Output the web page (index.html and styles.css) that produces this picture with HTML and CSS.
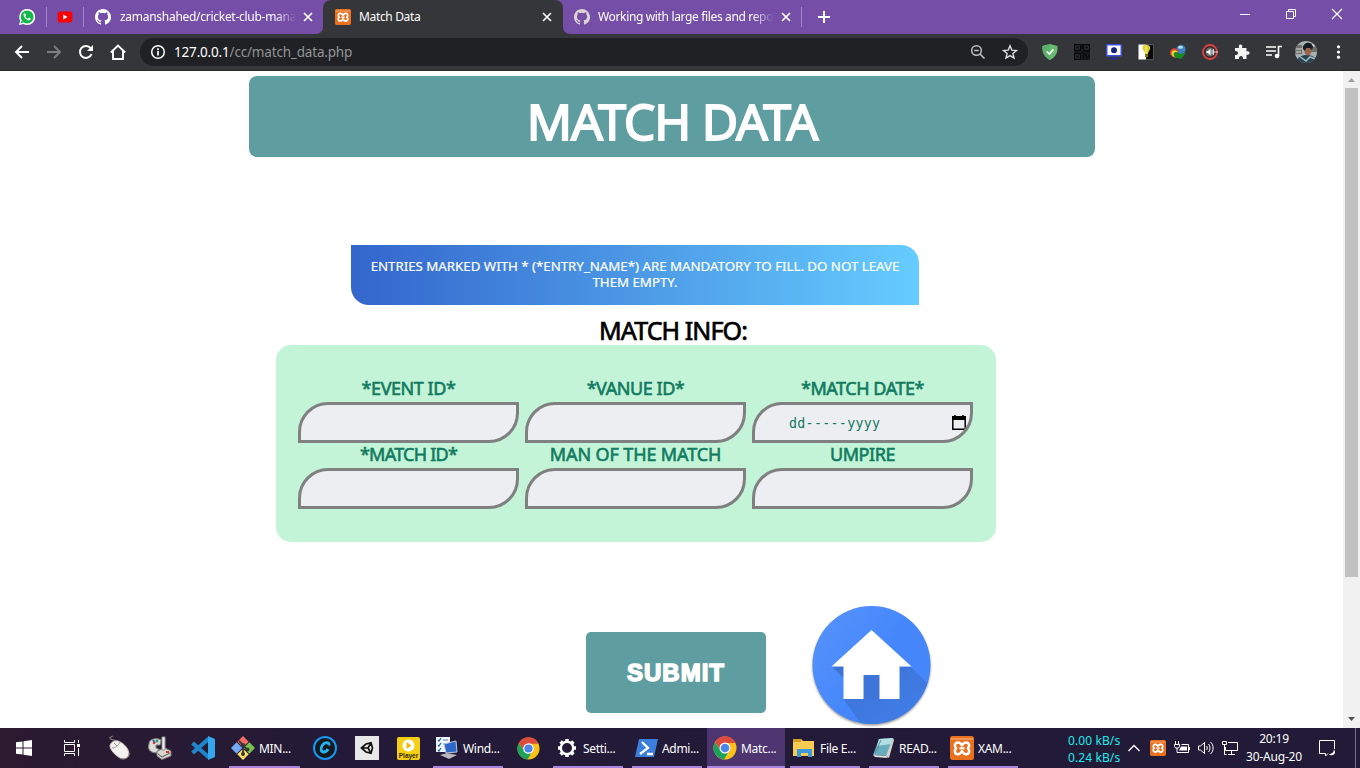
FILE: index.html
```html
<!DOCTYPE html>
<html lang="en">
<head>
<meta charset="utf-8">
<title>Match Data</title>
<link rel="stylesheet" href="styles.css">
</head>
<body>
<svg class="defs" aria-hidden="true">
  <symbol id="github" viewBox="0 0 16 16"><path fill="currentColor" d="M8 0C3.58 0 0 3.58 0 8c0 3.54 2.29 6.53 5.47 7.59.4.07.55-.17.55-.38v-1.49c-2.01.37-2.53-.49-2.69-.94-.09-.23-.48-.94-.82-1.13-.28-.15-.68-.52-.01-.53.63-.01 1.08.58 1.23.82.72 1.21 1.87.87 2.33.66.07-.52.28-.87.51-1.07-1.78-.2-3.64-.89-3.64-3.95 0-.87.31-1.59.82-2.15-.08-.2-.36-1.02.08-2.12 0 0 .67-.21 2.2.82a7.4 7.4 0 0 1 4 0c1.53-1.04 2.2-.82 2.2-.82.44 1.1.16 1.92.08 2.12.51.56.82 1.27.82 2.15 0 3.07-1.87 3.75-3.65 3.95.29.25.54.73.54 1.48v2.2c0 .21.15.46.55.38A8 8 0 0 0 8 0z"/></symbol>
  <symbol id="xampp" viewBox="0 0 24 24"><rect width="24" height="24" rx="2.5" fill="#e9701f"/><path d="M1 3h22" stroke="#f6b07c" stroke-width="1.200"/><path d="M12 9.500C10.500 6.500 9 6.300 7.500 6.500 4.500 7 4 10 6.200 12.300 4 14.500 4.500 18 7.500 18.200c1.500.1 3-.4 4.500-3.200 1.500 2.800 3 3.300 4.500 3.200 3-.2 3.500-3.700 1.300-5.900C20 10 19.500 7 16.500 6.500 15 6.300 13.500 6.500 12 9.500z" fill="none" stroke="#fff" stroke-width="2.500" stroke-linejoin="round"/><path d="M9.500 12.300h5" stroke="#fff" stroke-width="2.200"/></symbol>
  <symbol id="close" viewBox="0 0 10 10"><path d="M1 1l8 8M9 1L1 9" stroke="#fff" stroke-width="1.700"/></symbol>
  <symbol id="chrome" viewBox="0 0 24 24"><circle cx="12" cy="12" r="11.500" fill="#fbc116"/><path d="M2 6.300A11.500 11.500 0 0 1 22.500 7H12a5 5 0 0 0-4.600 7z" fill="#dd4b3e"/><path d="M2 6.300A11.500 11.500 0 0 0 11 23.500l5-8.600A5 5 0 0 1 7.500 14.500z" fill="#1da15d"/><circle cx="12" cy="12" r="5.500" fill="#fff"/><circle cx="12" cy="12" r="4.300" fill="#4a86e8"/></symbol>
</svg>
<div class="tabs">
  <div class="strip strip-left">
    <svg class="fav" viewBox="0 0 16 16"><path d="M0 16l1.200-4.200A8 8 0 1 1 4.400 15z" fill="#fff"/><circle cx="8.100" cy="7.900" r="6.500" fill="#12b84a"/><path d="M1.600 14.400l.8-3 2.200 2.200z" fill="#12b84a"/><path d="M5.600 4.200c-1.800.7-1 3.400.8 5.200s4.300 2.700 5.200.8c.3-.8-1.500-1.700-2-1.200l-.7.800C7.600 9.300 6.700 8.400 6.300 7.200l.6-.8c.3-.4-.6-2.300-1.300-2.200z" fill="#fff"/></svg>
    <i class="sep"></i>
    <svg class="fav yt" viewBox="0 0 16 16"><rect x=".7" y="2.500" width="14.600" height="11" rx="2" fill="#f00"/><path d="M6.300 5.500v5l4.300-2.500z" fill="#fff"/></svg>
    <i class="sep"></i>
    <svg class="fav pale"><use href="#github"/></svg>
    <span class="tab-title faded t-repo">zamanshahed/cricket-club-manag</span>
    <svg class="x"><use href="#close"/></svg>
  </div>
  <div class="active-wrap"><div class="active-tab">
    <svg class="fav"><use href="#xampp"/></svg><span class="tab-title t-active">Match Data</span><svg class="x"><use href="#close"/></svg>
  </div></div>
  <div class="strip strip-right">
    <svg class="fav dull"><use href="#github"/></svg>
    <span class="tab-title faded">Working with large files and repos</span>
    <svg class="x"><use href="#close"/></svg>
    <i class="sep last"></i>
    <svg class="plus" viewBox="0 0 12 12"><path d="M6 0v12M0 6h12" stroke="#fff" stroke-width="2"/></svg>
    <div class="win">
      <svg viewBox="0 0 12 12"><path d="M1 6.500h10" stroke="#fff"/></svg>
      <svg viewBox="0 0 12 12"><path d="M1.500 3.500h7v7h-7zM3.500 3.500v-2h7v7h-2" fill="none" stroke="#fff"/></svg>
      <svg viewBox="0 0 12 12"><path d="M1 1l10 10M11 1L1 11" stroke="#fff" stroke-width="1.200"/></svg>
    </div>
  </div>
</div>
<div class="toolbar">
  <svg viewBox="0 0 16 16"><path d="M15 8H2M8 2L2 8l6 6" fill="none" stroke="#fff" stroke-width="1.900"/></svg>
  <svg viewBox="0 0 16 16"><path d="M1 8h13M8 2l6 6-6 6" fill="none" stroke="#7c7d80" stroke-width="1.900"/></svg>
  <svg viewBox="0 0 16 16"><path d="M13.600 10A6 6 0 1 1 12.700 4.200" fill="none" stroke="#fff" stroke-width="2"/><path d="M15 1v6H9z" fill="#fff"/></svg>
  <svg viewBox="0 0 16 16"><path d="M.8 8.500L8 1.500l7.200 7M3 7v8h10V7" fill="none" stroke="#fff" stroke-width="1.900"/></svg>
  <div class="omnibox">
    <svg viewBox="0 0 16 16"><circle cx="8" cy="8" r="6.300" fill="none" stroke="#fff" stroke-width="1.500"/><path d="M8 7v4.500M8 4.300v1.600" stroke="#fff" stroke-width="1.700"/></svg>
    <span class="url"><b>127.0.0.1</b>/cc/match_data.php</span>
    <svg viewBox="0 0 16 16"><circle cx="6.500" cy="6.500" r="4.800" fill="none" stroke="#bfc0c2" stroke-width="1.500"/><path d="M4.200 6.500h4.600M10 10l4.500 4.500" stroke="#bfc0c2" stroke-width="1.500"/></svg>
    <svg viewBox="0 0 16 16"><path d="M8 1.800l1.800 4.300 4.700.4-3.600 3 1.100 4.600L8 11.600l-4 2.500 1.100-4.600-3.600-3 4.700-.4z" fill="none" stroke="#dedfe0" stroke-width="1.400"/></svg>
  </div>
  <svg viewBox="0 0 16 16"><path d="M8 0l7.500 2c.5 7-2 11-7.500 14C2.500 13 0 9 .5 2z" fill="#68bc71"/><path d="M8 0v16C2.500 13 0 9 .5 2z" fill="#5cae6b"/><path d="M4.800 7.500l2.500 2.500 4-4.500" fill="none" stroke="#fff" stroke-width="1.700"/></svg>
  <svg viewBox="0 0 16 16"><path d="M0 0h16v16H0z" fill="#1b1c1e"/><g fill="none" stroke="#08090a" stroke-width="1.200"><path d="M.6.600h5.800v5.800H.6zM9.600.600h5.800v5.800H9.600zM.6 9.600h5.800v5.800H.6zM2.500 3.500h2M11.500 3.500h2M2.500 12.500h2M8 0v5M7 8h9M8 10h4v2H9v3h3M15 10v3h-2v3"/></g><path d="M1.700 1.700h3.600v3.600H1.700zM10.700 1.700h3.600v3.600h-3.600zM1.700 10.700h3.600v3.600H1.700z" fill="none" stroke="#3a3b3f" stroke-width=".6"/></svg>
  <svg viewBox="0 0 16 16"><rect width="16" height="12.500" rx="1" fill="#3d4fd6"/><rect x="1.500" y="1.500" width="13" height="9.500" fill="#fff"/><circle cx="8" cy="6.300" r="3" fill="#16237d"/><path d="M3 13.500h10l-1.500 2h-7z" fill="#24309a"/></svg>
  <svg viewBox="0 0 16 16"><rect x=".5" y=".5" width="15" height="15" fill="#fff"/><path d="M8 .5h7.500v15H8z" fill="#090909"/><path d="M4.500 3C5 0 11 0 12 3c.7 3-1.700 4-2 7H7c0-3-3-4-2.500-7z" fill="#d9cf2d"/><path d="M8 2v7" stroke="#fff8a0"/><path d="M7 10h3v2.500L8.500 14 7 12.500z" fill="#786c20"/></svg>
  <svg viewBox="0 0 16 16"><circle cx="11" cy="5.500" r="4.700" fill="#3f7fbe"/><ellipse cx="10.500" cy="3.300" rx="2.500" ry="1.500" fill="#b9def0"/><path d="M0 8c1-4 5-5 8-2l-1 7c-4 1-7-1-7-5z" fill="#e3432b"/><path d="M1.500 9c0-3 4-4 6-1l-1 5.500c-3 0-5-2-5-4.500z" fill="#edd935"/><path d="M4 9c1-2 4-1 5 1l7-1-5 6-3-1c-3 0-5-2-4-5z" fill="#178a20"/></svg>
  <svg viewBox="0 0 16 16"><circle cx="8" cy="8" r="7" fill="#28292b" stroke="#e34242" stroke-width="1.800"/><circle cx="8" cy="8" r="4.500" fill="#66686a"/><path d="M4.500 7H6l2.500-2.500v7L6 9H4.500z" fill="#fff"/><path d="M10 6v4M11.500 5v6M12 8h4" stroke="#ddd"/></svg>
  <svg viewBox="0 0 16 16"><path d="M1 4h4C4.300 1.500 5.200.500 6.500.500S8.800 1.500 8 4h4.500v3.500c2-.7 3 .2 3 1.500s-1 2.200-3 1.500V15H9c.3-2-.7-3-2-3s-2.300 1-2 3H1v-4c2 .2 3-.6 3-2S3 6.800 1 7z" fill="#f3f3f3"/></svg>
  <svg viewBox="0 0 16 16"><path d="M0 3h10M0 7h10M0 11h6M12.500 12V2.500H16" fill="none" stroke="#fff" stroke-width="1.600"/><circle cx="11" cy="12" r="2.300" fill="#fff"/></svg>
  <svg class="avatar" viewBox="0 0 22 22"><clipPath id="av"><circle cx="11" cy="11" r="11"/></clipPath><g clip-path="url(#av)"><path d="M0 0h22v22H0z" fill="#a7b2b0"/><path d="M0 4h7v9H0zM16 6h6v5h-6z" fill="#716f6a"/><path d="M1 8h6M1 11h5M16 4h5" stroke="#d9e1df"/><path d="M2 22c0-6 4-8 10-8 5 0 9 2 9 8z" fill="#294451"/><path d="M4 15l7 5 4-4 5 2" stroke="#9dbbc8" fill="none" stroke-width="1.500"/><ellipse cx="13" cy="9.500" rx="3.500" ry="5" fill="#9b6349"/><path d="M8 8C7 1 17-1 18 6l-1 3-2-2h-4l-1 3z" fill="#171b22"/></g></svg>
  <svg viewBox="0 0 16 16"><g fill="#fff"><circle cx="8.500" cy="2.800" r="1.600"/><circle cx="8.500" cy="8" r="1.600"/><circle cx="8.500" cy="13.200" r="1.600"/></g></svg>
</div>
<div class="viewport">
  <main>
    <h1>MATCH DATA</h1>
    <p class="notice">ENTRIES MARKED WITH * (*ENTRY_NAME*) ARE MANDATORY TO FILL. DO NOT LEAVE<br>THEM EMPTY.</p>
    <h2>MATCH INFO:</h2>
    <form>
      <label><span class="name">*EVENT ID*</span><span class="field"></span></label>
      <label><span class="name">*VANUE ID*</span><span class="field"></span></label>
      <label><span class="name">*MATCH DATE*</span><span class="field date"><span>dd-----yyyy</span><svg viewBox="0 0 14 16"><path d="M3 0v3M11 0v3" stroke="#000" stroke-width="1.600"/><path d="M0 1h14v4H0z"/><path d="M.8 4v10.200h12.400V4" fill="none" stroke="#000" stroke-width="1.500"/></svg></span></label>
      <label><span class="name tight">*MATCH ID*</span><span class="field"></span></label>
      <label><span class="name loose">MAN OF THE MATCH</span><span class="field"></span></label>
      <label><span class="name">UMPIRE</span><span class="field"></span></label>
    </form>
    <div class="actions">
      <button type="button">SUBMIT</button>
      <svg class="home" viewBox="0 0 126 126">
        <defs><linearGradient id="hb" x1="0" y1="0" x2="1" y2=".7"><stop offset="0" stop-color="#5893fb"/><stop offset=".6" stop-color="#4587fb"/></linearGradient><linearGradient id="hs" x1="0" y1="0" x2="1" y2="1"><stop offset="0" stop-color="#3c72d2"/><stop offset="1" stop-color="#4181ee"/></linearGradient><clipPath id="hc"><circle cx="63.500" cy="62" r="59"/></clipPath><filter id="blur" x="-10%" y="-10%" width="120%" height="120%"><feGaussianBlur stdDeviation="1.300"/></filter></defs>
        <circle cx="63.500" cy="63.500" r="59" fill="#777" opacity=".75" filter="url(#blur)"/>
        <circle cx="63.500" cy="62" r="59" fill="url(#hb)"/>
        <g clip-path="url(#hc)"><path d="M24 63.500L35.500 75V63.500zM103 64l30 30v36H59L35.500 96h56V64z" fill="url(#hs)"/><path d="M55.500 72h16v24h-16z" fill="#3d75d8"/></g>
        <path d="M63.500 27l40 36.500h-12V96h-20V72h-16v24h-20V63.500h-12z" fill="#fff"/>
      </svg>
    </div>
  </main>
  <div class="scroll">
    <svg viewBox="0 0 17 17"><path d="M5 11l3.500-4 3.500 4z" fill="#a0a0a0"/></svg>
    <i></i>
    <svg class="down" viewBox="0 0 17 17"><path d="M5 6h7l-3.500 4z" fill="#505050"/></svg>
  </div>
</div>
<div class="taskbar">
  <span class="ico"><svg width="16" height="16" viewBox="0 0 16 16"><path d="M0 2.300L6.500 1.400v6.100H0zM7.500 1.200L16 0v7.500H7.500zM0 8.500h6.500v6.100L0 13.700zM7.500 8.500H16V16l-8.500-1.200z" fill="#fff"/></svg></span>
  <span class="ico"><svg width="16" height="16" viewBox="0 0 16 16"><path d="M.5 4.500h10v7H.5zM.5 0v2.500h10V0M.5 16v-2.500h10V16M14.500 0v3M14.500 8v8" fill="none" stroke="#fff"/><path d="M13 4h3v3h-3z" fill="#fff"/></svg></span>
  <span class="ico"><svg width="24" height="26" viewBox="0 0 24 26"><path d="M8 7C9 3 2 6 3 2.500L6 1" fill="none" stroke="#777" stroke-width="1.200"/><path d="M3 11c0-3 4-6 8-5 6 2 11 8 11 13 0 4-5 6-9 4C9 21 3 15 3 11z" fill="#f3f2ef" stroke="#c5bdb5"/><path d="M5 13c3 0 7-3 8-6M7 8l3 3" stroke="#999" fill="none"/><path d="M13 23.500c5 1.500 9-1 9-5" stroke="#887d77" fill="none"/></svg></span>
  <span class="ico"><svg width="24" height="24" viewBox="0 0 24 24"><path d="M1 8c0-6 9-6 12-4l-1 5H8v3l4 2-2 3C4 17-1 15 1 8z" fill="#deddd7" stroke="#888"/><path d="M5 4l2 3" stroke="#36a" stroke-width="2"/><circle cx="9" cy="5" r="1.500" fill="#2ca56a"/><circle cx="6" cy="7" r="1.200" fill="#d33"/><path d="M9 15l8-3 6 3v5l-9 3.500L9 20z" fill="#d6d6cc" stroke="#777"/><path d="M10 18l4 3 8-4" stroke="#555" fill="none"/><path d="M14 1h3v13h-3z" fill="#eee" stroke="#999"/><path d="M18 16h3" stroke="#d33" stroke-width="2"/></svg></span>
  <span class="ico"><svg width="24" height="24" viewBox="0 0 24 24"><path d="M18 2.500L1.500 17M18 21.500L1.500 7" stroke="#1f86cc" stroke-width="4.200"/><path d="M17 0l7 3v18l-7 3z" fill="#35a7ed"/></svg></span>
  <span class="task"><svg viewBox="0 0 24 24"><g transform="rotate(45 12 12)"><rect x="3.500" y="3.500" width="8" height="8" fill="#f36d63"/><rect x="12.500" y="3.500" width="8" height="8" fill="#76c34f"/><rect x="3.500" y="12.500" width="8" height="8" fill="#71a9f7"/><rect x="12.500" y="12.500" width="8" height="8" fill="#ffe168"/></g><path d="M8 5l4 4v9M12 10l5 4" stroke="#3b3435" stroke-width="1.800" fill="none"/><g fill="#3b3435"><circle cx="12" cy="9" r="2"/><circle cx="16.500" cy="13.500" r="2"/><circle cx="12" cy="18" r="2"/></g></svg>MIN...</span>
  <span class="ico"><svg width="24" height="24" viewBox="0 0 24 24"><circle cx="12" cy="12" r="11" fill="#15181d" stroke="#1598ef" stroke-width="2"/><path d="M16 9.500c.5-4-4.500-3.500-6.500-.5-2.500 4-1.500 7 1 7 2 0 3.500-1 4.500-3" fill="none" stroke="#22b5f5" stroke-width="2.800"/></svg></span>
  <span class="ico"><svg width="24" height="24" viewBox="0 0 24 24"><path d="M0 0h24v24H0z" fill="#e8e8e8"/><path d="M6.500 12l4.500-4 5-1.200 1.500 5.200-1.500 5.200-5-1.200zM6.500 12H13l3-5M13 12l3 5" fill="none" stroke="#111" stroke-width="1.700"/></svg></span>
  <span class="ico"><svg width="23" height="23" viewBox="0 0 23 23"><rect width="23" height="23" rx="2" fill="#f6ce13"/><circle cx="11.500" cy="8.500" r="6" fill="#fff"/><path d="M9.500 5v7l5-3.500z" fill="#f0bd00"/><text x="11.500" y="21" text-anchor="middle" class="player">Player</text></svg></span>
  <span class="task"><svg viewBox="0 0 24 24"><path d="M1 1h14v15H1z" fill="#f2f6fa"/><path d="M3 4l1 1 2-3M3 9l1 1 2-3M3 14l1 1 2-3" stroke="#2462ae" fill="none" stroke-width="1.300"/><path d="M8 4h5M8 8h5" stroke="#68a"/><path d="M9 8l12-3 1 11-11 1z" fill="#2e67ca" stroke="#bdc8dd"/><path d="M5 19l7-2 10 2-8 4z" fill="#b8b7bb"/></svg>Wind...</span>
  <span class="ico"><svg width="23" height="23"><use href="#chrome"/></svg></span>
  <span class="task"><svg viewBox="0 0 24 24"><circle cx="12" cy="12" r="6.200" fill="none" stroke="#fff" stroke-width="2.400"/><path d="M12 3v3M12 18v3M3 12h3M18 12h3M5.600 5.600l2.200 2.200M16.200 16.200l2.200 2.200M18.400 5.600l-2.200 2.200M7.800 16.200l-2.200 2.200" stroke="#fff" stroke-width="3.500"/></svg>Setti...</span>
  <span class="task"><svg viewBox="0 0 24 24"><path d="M5 3h19l-4 18H1z" fill="#3b7edb"/><path d="M8 6l6 6-8 6M13 18h6" stroke="#fff" stroke-width="2.300" fill="none"/></svg>Admi...</span>
  <span class="task current"><svg><use href="#chrome"/></svg>Matc...</span>
  <span class="task"><svg viewBox="0 0 24 24"><path d="M1 3h8l2 2h11v15H1z" fill="#f9cb50"/><path d="M1 3h8v3H1z" fill="#dc9c28"/><path d="M5 21v-8h15v8h-4v-4H9v4z" fill="#3b99dc"/></svg>File E...</span>
  <span class="task"><svg viewBox="0 0 24 24"><path d="M8 3l14-1-5 18-15-1z" fill="#67adbd"/><path d="M8 3l14-1-2 6-14 2z" fill="#b2dfe4"/><path d="M22 2l1 2-5 18-3-2z" fill="#d5d1c8"/><path d="M2 19l13 1 2 2-13-1z" fill="#e6e6e1"/><path d="M4 17L10 4" stroke="#54929f"/></svg>READ...</span>
  <span class="task"><svg><use href="#xampp"/></svg>XAM...</span>
  <span class="net">0.00 kB/s<br>0.24 kB/s</span>
  <span class="tray">
    <svg viewBox="0 0 16 16"><path d="M2.500 11L8 5.500l5.500 5.500" fill="none" stroke="#fff" stroke-width="1.300"/></svg>
    <svg><use href="#xampp"/></svg>
    <svg viewBox="0 0 16 16"><path d="M5.500 12.500h9v-8h-7M15.500 7v3M1.500 1v3M4.500 1v3M.500 4.500h5v2l-1 1.500h-3l-1-1.500zM3 8v4.500h3" fill="none" stroke="#fff"/><path d="M7 6.500h6v4H5z" fill="#fff"/></svg>
    <svg viewBox="0 0 16 16"><path d="M.5 6v4h2L6.500 13.500v-11L2.500 6zM8.500 6c1 1 1 3 0 4M10.500 4c2 2 2 6 0 8M12.500 2c3.500 3 3.500 9 0 12" fill="none" stroke="#fff"/></svg>
    <svg viewBox="0 0 16 16"><path d="M6 2.500h9.500v8H3.500V7M9.500 10.500V14M6 14.500h7M.5 1.500h4v3h-4zM2.500 4.500v10h2" fill="none" stroke="#fff"/></svg>
  </span>
  <span class="clock">20:19<br>30-Aug-20</span>
  <span class="ico note"><svg width="16" height="17" viewBox="0 0 16 17"><path d="M9 13.500L6.500 16v-2.500h-6V.500h15V9" fill="none" stroke="#fff"/><path d="M15 9c0 3-2 5-5 5 1 2 6 2 6-2z" fill="#fff"/></svg></span>
  <i class="desk"></i>
</div>
</body>
</html>
```
FILE: styles.css
```css
* { box-sizing: border-box; }
body { margin: 0; width: 1360px; height: 768px; overflow: hidden; display: flex; flex-direction: column; background: #fff; font-family: "Noto Sans", "Open Sans", sans-serif; }
svg { display: block; flex: none; }
.defs { position: absolute; width: 0; height: 0; }

/* Browser tabs */
.tabs { height: 34px; flex: none; display: flex; background: #35363a; color: #fff; font-size: 12px; }
.strip { background: #754ea8; display: flex; align-items: center; height: 34px; }
.strip-left { width: 323px; padding-left: 19px; border-bottom-right-radius: 7px; }
.strip-right { flex: 1; padding-left: 11px; border-bottom-left-radius: 7px; }
.fav { width: 16px; height: 16px; }
.pale { color: #fff; }
.dull { color: #ddd5d3; }
.sep { width: 1px; height: 20px; background: #a386c7; margin: 0 11px; }
.yt { margin: 0 -1px; }
.tab-title { white-space: nowrap; overflow: hidden; margin-left: 8px; letter-spacing: -.35px; line-height: 18px; }
.faded { width: 176px; -webkit-mask-image: linear-gradient(90deg, #000 88%, transparent); mask-image: linear-gradient(90deg, #000 88%, transparent); }
.t-repo { letter-spacing: -.28px; margin-left: 9px; }
.t-active { width: 183px; }
.x { width: 10px; height: 10px; margin-left: 7px; }
.active-wrap { width: 240px; background: linear-gradient(#754ea8 50%, #35363a 50%); }
.active-tab { height: 34px; display: flex; align-items: center; padding-left: 12px; background: #35363a; border-radius: 8px 8px 0 0; }
.active-tab .x { margin-left: 0; }
.sep.last { margin: 0 16px 0 10px; }
.plus { width: 12px; height: 12px; }
.win { margin: -6px 17px 0 auto; display: flex; gap: 34px; }
.win svg { width: 12px; height: 12px; }

/* Toolbar */
.toolbar { height: 37px; flex: none; display: flex; align-items: center; background: #35363a; border-bottom: 1px solid #28292b; padding: 0 6px; }
.toolbar > svg { width: 16px; height: 16px; margin: 0 8px; }
.toolbar > .avatar { width: 22px; height: 22px; margin: 0 5px; }
.omnibox { width: 888px; height: 28px; margin: 0 6px; border-radius: 14px; background: #202124; display: flex; align-items: center; padding: 0 10px; }
.omnibox svg { width: 16px; height: 16px; }
.omnibox svg:last-child { margin-left: 16px; }
.url { flex: 1; margin-left: 8px; color: #939496; font-size: 13.500px; letter-spacing: -.180px; }
.url b { color: #fff; font-weight: 400; }

/* Page */
.viewport { height: 657px; flex: none; display: flex; }
main { width: 1343px; display: flex; flex-direction: column; align-items: flex-start; }
h1 { margin: 5px 0 0 249px; width: 846px; height: 81px; border-radius: 8px; background: #5f9ea0; color: #fff; text-align: center; font-size: 50px; font-weight: 400; line-height: 90px; letter-spacing: -1.200px; -webkit-text-stroke: 1.800px #fff; }
.notice { margin: 88px 0 0 351px; width: 568px; height: 60px; padding-top: 13px; border-radius: 0 18px 0 18px; background: linear-gradient(90deg, #3366cc, #66ccff); color: #fff; text-align: center; font-size: 13.300px; line-height: 16px; white-space: nowrap; letter-spacing: -.02px; -webkit-text-stroke: .2px #fff; }
h2 { margin: 8px 0 0 276px; width: 794px; height: 32px; line-height: 34px; text-align: center; font-size: 25px; font-weight: 400; letter-spacing: -.900px; -webkit-text-stroke: .700px #000; }
form { margin: 0 0 0 276px; width: 720px; height: 197px; flex: none; border-radius: 15px; background: #c3f4d7; padding: 31px 22px; display: grid; grid-template-columns: repeat(3, 221px); grid-auto-rows: 66px; column-gap: 6px; align-content: start; }
label { color: #117a60; text-align: center; font-size: 18px; line-height: 25px; white-space: nowrap; }
.name { display: block; height: 26px; letter-spacing: -.450px; -webkit-text-stroke: .600px #117a60; }
.name.tight { letter-spacing: -.750px; }
.name.loose { letter-spacing: -.120px; }
.field { display: flex; align-items: center; height: 41px; border: 3px solid gray; border-radius: 30px 0; background: #edeef2; }
.date { overflow: hidden; padding: 1px 0 0 34px; font-family: "DejaVu Sans Mono", monospace; font-size: 13.300px; letter-spacing: .3px; }
.date svg { width: 14px; height: 16px; margin-left: 72px; }
.actions { display: flex; margin: 60px 0 0 586px; flex: none; height: 126px; }
button { width: 180px; height: 81px; margin-top: 30px; border: 0; border-radius: 5px; background: #5f9ea0; color: #fff; font: 700 24px "Liberation Sans", sans-serif; letter-spacing: 1px; -webkit-text-stroke: 1.500px #fff; }
.home { width: 126px; height: 126px; margin: 1px 0 0 42px; }
.scroll { width: 17px; background: #f1f1f1; display: flex; flex-direction: column; align-items: center; }
.scroll svg { width: 17px; height: 17px; }
.scroll i { width: 13px; height: 489px; background: #c1c1c1; }
.scroll .down { margin-top: auto; }

/* Taskbar */
.viewport { overflow: hidden; }
.taskbar { height: 40px; flex: none; display: flex; background: linear-gradient(90deg, #2b1a30, #241a37 25%, #211b38); color: #fff; font-size: 12px; }
.ico { display: flex; align-items: center; justify-content: center; width: 48px; }
.ico:nth-child(3) { width: 45px; }
.ico:nth-child(4) { width: 37px; }
.ico:nth-child(5) { width: 50px; }
.ico:nth-child(7) { width: 50px; }
.ico:nth-child(8) { width: 34px; }
.ico:nth-child(9) { width: 49px; }
.ico:nth-child(11) { width: 50px; }
.task { width: 70px; margin-right: 9px; display: flex; align-items: center; gap: 4px; padding-left: 2px; border-bottom: 2px solid #a984df; padding-top: 2px; letter-spacing: -.3px; white-space: nowrap; }
.task svg { width: 24px; height: 24px; }
.task:nth-child(6) { width: 71px; margin: 0 0 0 1px; }
.task:nth-child(10) { margin-right: 0; }
.task:nth-child(13) { margin-right: 5px; }
.task.current { width: 78px; margin-right: 5px; padding-left: 6px; background: #4d356f; }
.player { font: 700 6.500px "Liberation Sans", sans-serif; fill: #332c0a; }
.net { width: 56px; margin-left: 41px; color: #1ee9eb; line-height: 17px; padding-top: 4px; letter-spacing: .1px; white-space: nowrap; }
.tray { display: flex; align-items: center; gap: 8px; width: 112px; margin-left: 2px; }
.tray svg { width: 16px; height: 16px; }
.clock { width: 64px; margin-left: 4px; text-align: center; line-height: 18px; padding-top: 2px; letter-spacing: -.2px; white-space: nowrap; }
.note { width: 42px; }
.desk { margin-left: auto; width: 5px; border-left: 1px solid #77708a; }
```
